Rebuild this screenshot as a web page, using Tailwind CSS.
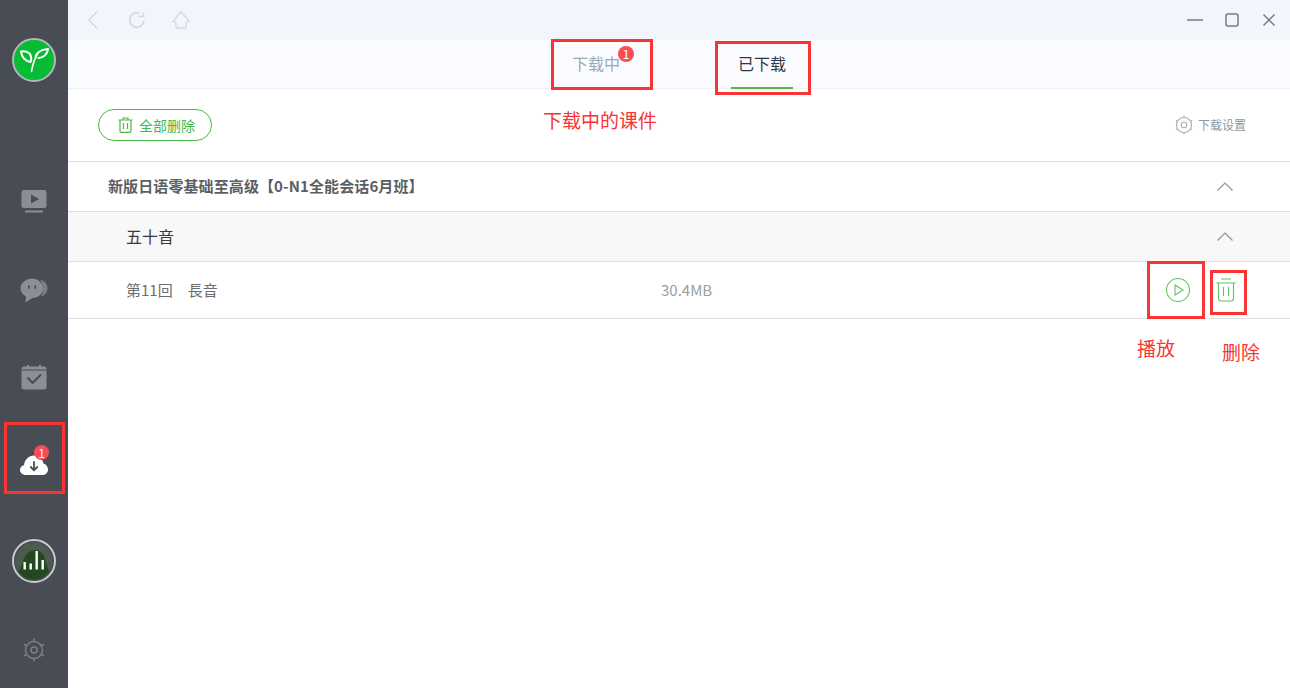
<!DOCTYPE html>
<html lang="zh-CN">
<head>
  <meta charset="UTF-8" />
  <title>下载管理</title>
  <script src="https://cdn.jsdelivr.net/npm/@tailwindcss/browser@4"></script>
</head>
<body class="bg-white overflow-hidden font-['Noto_Sans_CJK_SC',sans-serif]">
  <div class="relative flex h-[688px] w-[1290px] overflow-hidden">

    <!-- sidebar -->
    <aside class="flex w-[68px] shrink-0 flex-col items-center bg-[#484c54]">
      <div class="mt-[38px] flex h-11 w-11 items-center justify-center rounded-full border-2 border-[#b5b7ba] bg-[#07bb35]">
        <svg width="32" height="32" viewBox="0 0 32 32" fill="none" stroke="#fff" stroke-linecap="round" stroke-linejoin="round">
          <path d="M13.500 27.500 C14.500 21 16.500 15 19.500 10" stroke-width="1.600" />
          <path d="M12.500 18 C8 17.500 3.500 13.500 3 7.500 C6.500 6.500 12 8 13 12.500 C13.500 14.500 13.300 16.500 12.500 18 Z" stroke-width="2" />
          <path d="M17.500 14 C17.500 9.500 22 5.500 30 5 C29.500 10 25.500 14 20.500 14 " stroke-width="2" />
        </svg>
      </div>
      <svg class="mt-[108px]" width="26" height="24" viewBox="0 0 26 24" fill="#8b8e93">
        <rect x="0.500" y="0" width="25" height="18" rx="2.500" />
        <path d="M10 4.500 L18 9 L10 13.500 Z" fill="#484c54" />
        <rect x="4" y="20.500" width="18" height="2" rx="0.500" />
      </svg>
      <svg class="mt-[64px]" width="28" height="26" viewBox="0 0 28 26">
        <path d="M20 1.500 C24.500 2.500 27.500 6 27.500 10 C27.500 14 25 17.500 21 18.500 C23.500 15 24 7 20 1.500 Z" fill="#7b7e84" />
        <path d="M12 0.500 C18 0.500 23 5 23 10.500 C23 16 18 20 12.500 20 L5.500 24.500 L6 18.500 C2.500 16.500 0.500 13.500 0.500 10.500 C0.500 5 6 0.500 12 0.500 Z" fill="#8b8e93" />
        <rect x="8" y="7" width="1.600" height="4" rx="0.800" fill="#484c54" />
        <rect x="14.500" y="7" width="1.600" height="4" rx="0.800" fill="#484c54" />
      </svg>
      <svg class="mt-[61px]" width="26" height="25" viewBox="0 0 26 25" fill="none">
        <rect x="0.500" y="1.500" width="25" height="23" rx="2.500" fill="#8b8e93" />
        <rect x="0.500" y="4.500" width="25" height="1" fill="#484c54" />
        <rect x="6" y="0" width="2" height="4" fill="#8b8e93" />
        <rect x="18" y="0" width="2" height="4" fill="#8b8e93" />
        <path d="M7 13 L11.500 18 L19.500 10" stroke="#484c54" stroke-width="2" stroke-linecap="round" stroke-linejoin="round" />
      </svg>
      <div class="relative mt-[63px] h-[23px] w-7">
        <svg class="block" width="28" height="23" viewBox="0 0 28 23">
          <path d="M6 22 C2.500 22 0 19.800 0 17 C0 14.500 1.800 12.700 4 12.300 C4.500 6.500 9 2.500 14 2.500 C18.500 2.500 22.500 6 23.500 10.500 C26 11.300 28 13.500 28 16.500 C28 19.800 25.500 22 22.500 22 Z" fill="#fff" />
          <path d="M14 9 L14 17 M10.800 14 L14 17.300 L17.200 14" fill="none" stroke="#484c54" stroke-width="1.800" stroke-linecap="round" stroke-linejoin="round" />
        </svg>
        <span class="absolute left-[14px] top-[-8px] flex h-[15px] w-[15px] items-center justify-center rounded-full bg-[#fb4c55] text-[12px] leading-none text-white">1</span>
      </div>
      <div class="mt-[63px] flex h-11 w-11 items-center justify-center rounded-full border-2 border-[#c9cacc] bg-[#484c54]">
        <svg width="40" height="40" viewBox="0 0 40 40">
          <circle cx="20" cy="20" r="18.500" fill="#4d5a50" />
          <path d="M4.500 30 C9 26 9 14 15 11 C21 8 27 9 30 15 C32 20 33 27 35.500 30 C32 36 26 38.500 20 38.500 C13 38.500 8 35 4.500 30 Z" fill="#23481f" />
          <rect x="9.500" y="21" width="2.400" height="7.500" fill="#fff" />
          <rect x="15.500" y="22.500" width="2.400" height="6" fill="#fff" />
          <rect x="21.500" y="10" width="2.400" height="18.500" fill="#fff" />
          <rect x="27.500" y="19" width="2.400" height="9.500" fill="#fff" />
        </svg>
      </div>
      <svg class="mt-[55px]" width="24" height="24" viewBox="0 0 24 24" fill="none" stroke="#7d8085" stroke-width="1.500">
        <circle cx="12" cy="12" r="8.500" />
        <circle cx="12" cy="12" r="3" />
        <path d="M12 1 V3.500 M12 20.500 V23 M2.500 6.500 L4.600 7.700 M19.400 16.300 L21.500 17.500 M2.500 17.500 L4.600 16.300 M19.400 7.700 L21.500 6.500" stroke-linecap="round" />
      </svg>
    </aside>

    <!-- main -->
    <main class="flex min-w-0 flex-1 flex-col">
      <header class="flex h-10 items-center bg-[#f2f5fc] pl-[18px] pr-[13px]">
        <svg width="14" height="18" viewBox="0 0 14 18" fill="none" stroke="#d5d8df" stroke-width="1.400"><path d="M11 1 L2.800 9 L11 17" /></svg>
        <svg class="ml-[28px]" width="18" height="18" viewBox="0 0 18 18" fill="none" stroke="#d5d8df" stroke-width="1.700"><path d="M16 9.500 A7.200 7.200 0 1 1 11.500 2.300" /><path d="M10.500 5.500 H15.500 V1.500" stroke-width="1.300" /></svg>
        <svg class="ml-[26px]" width="18" height="18" viewBox="0 0 18 18" fill="none" stroke="#d5d8df" stroke-width="1.300"><path d="M3.500 10.500 H0.700 L9 0.800 L17.300 10.500 H14.500" /><path d="M3.800 11 V15.500 C3.800 16.500 4.500 17 5.500 17 H12.500 C13.500 17 14.200 16.500 14.200 15.500 V11" /></svg>
        <div class="ml-auto flex items-center gap-[21px]">
          <svg width="16" height="16" viewBox="0 0 16 16" fill="none" stroke="#6f7f90" stroke-width="1.500"><path d="M0 8 H16" /></svg>
          <svg width="16" height="16" viewBox="0 0 16 16" fill="none" stroke="#6f7f90" stroke-width="1.500"><rect x="2" y="2" width="12" height="12" rx="2" /></svg>
          <svg width="16" height="16" viewBox="0 0 16 16" fill="none" stroke="#6f7f90" stroke-width="1.500"><path d="M2.500 2.500 L13.500 13.500 M13.500 2.500 L2.500 13.500" /></svg>
        </div>
      </header>

      <nav class="flex h-[49px] items-stretch border-b border-[#f0f1f4] bg-[#fafbff] pl-[504px]">
        <div class="relative w-[48px] pt-[12px] text-[16px] leading-[22px] text-[#9aa9b8]">
          下载中
          <span class="absolute left-[46px] top-[6px] flex h-4 w-4 items-center justify-center rounded-full bg-[#fb4c55] text-[12px] leading-none text-white">1</span>
        </div>
        <div class="relative ml-[111px] flex h-[49px] w-[62px] flex-col items-center pt-[12px] text-[16px] leading-[22px] text-[#2f3a45]">
          已下载
          <span class="absolute bottom-0 left-0 h-0.5 w-[62px] bg-[#4cb848]"></span>
        </div>
      </nav>

      <div class="flex h-[73px] items-center justify-between border-b border-[#dedede] pl-[30px] pr-[44px]">
        <button class="flex h-8 w-[114px] items-center rounded-full border border-[#4cb848] pl-[19px] text-[14px] leading-[20px] text-[#42b84a]">
          <svg width="15" height="16" viewBox="0 0 15 16" fill="none" stroke="#4cb848" stroke-width="1.200"><path d="M0.500 3 H14.500 M5 3 V1 H10 V3" /><path d="M2 3 V14 C2 14.800 2.500 15.300 3.300 15.300 H11.700 C12.500 15.300 13 14.800 13 14 V3" /><path d="M5.500 6 V12 M9.500 6 V12" /></svg>
          <span class="ml-[6px]">全部删除</span>
        </button>
        <div class="flex items-center text-[12px] text-[#8f979f]">
          <svg width="20" height="20" viewBox="0 0 20 20" fill="none" stroke="#a9abad" stroke-width="1.100">
            <circle cx="10" cy="10" r="7.500" />
            <circle cx="10" cy="10" r="2.800" />
            <path d="M10 0.500 V2.500 M10 17.500 V19.500 M1.800 5.200 L3.500 6.200 M16.500 13.800 L18.200 14.800 M1.800 14.800 L3.500 13.800 M16.500 6.200 L18.200 5.200" />
          </svg>
          <span class="ml-[4px]">下载设置</span>
        </div>
      </div>

      <div class="flex h-[50px] items-center justify-between border-b border-[#dedede] pl-[40px] pr-[57px] pb-[1px] text-[15px] font-bold tracking-[0.1px] text-[#5b5f63]">
        <span>新版日语零基础至高级【0-N1全能会话6月班】</span>
        <svg width="16" height="9" viewBox="0 0 16 9" fill="none" stroke="#8d9297" stroke-width="1.200"><path d="M0.500 8.500 L8 1 L15.500 8.500" /></svg>
      </div>

      <div class="flex h-[50px] items-center justify-between border-b border-[#dedede] bg-[#f8f8f8] pl-[58px] pr-[57px] pb-[1px] text-[16px] text-[#3a3a3a]">
        <span>五十音</span>
        <svg width="16" height="9" viewBox="0 0 16 9" fill="none" stroke="#8d9297" stroke-width="1.200"><path d="M0.500 8.500 L8 1 L15.500 8.500" /></svg>
      </div>

      <div class="flex h-[57px] items-center border-b border-[#dedede] pl-[58px] text-[15px] text-[#6a6e72]">
        <span class="w-[535px] whitespace-pre">第11回　長音</span>
        <span class="w-[505px] text-[#9a9fa3]">30.4MB</span>
        <svg width="24" height="24" viewBox="0 0 24 24" fill="none" stroke="#5ec264" stroke-width="1.100"><circle cx="12" cy="12" r="11.500" /><path d="M9 7 L17 12 L9 17 Z" /></svg>
        <svg class="ml-[26px]" width="20" height="24" viewBox="0 0 20 24" fill="none" stroke="#5ec264" stroke-width="1.100"><path d="M0.500 5 H19.500 M5 1 H15" /><path d="M2.500 5 V20.500 C2.500 22 3.500 23 5 23 H15 C16.500 23 17.500 22 17.500 20.500 V5" /><path d="M7.500 9 V18 M12.500 9 V18" /></svg>
      </div>
    </main>

    <!-- red annotations drawn over the screenshot -->
    <div class="absolute left-[4px] top-[422px] h-[72px] w-[61px] border-[3px] border-[#f83434]"></div>
    <div class="absolute left-[551px] top-[39px] h-[51px] w-[102px] border-[3px] border-[#f83434]"></div>
    <div class="absolute left-[715px] top-[41px] h-[54px] w-[96px] border-[3px] border-[#f83434]"></div>
    <div class="absolute left-[1147px] top-[261px] h-[58px] w-[58px] border-[3px] border-[#f83434]"></div>
    <div class="absolute left-[1210px] top-[270px] h-[45px] w-[37px] border-[3px] border-[#f83434]"></div>
    <span class="absolute left-[543px] top-[106px] text-[19px] leading-[28px] text-[#f83434]">下载中的课件</span>
    <span class="absolute left-[1137px] top-[334px] text-[19px] leading-[28px] text-[#f83434]">播放</span>
    <span class="absolute left-[1222px] top-[338px] text-[19px] leading-[28px] text-[#f83434]">删除</span>
  </div>
</body>
</html>
